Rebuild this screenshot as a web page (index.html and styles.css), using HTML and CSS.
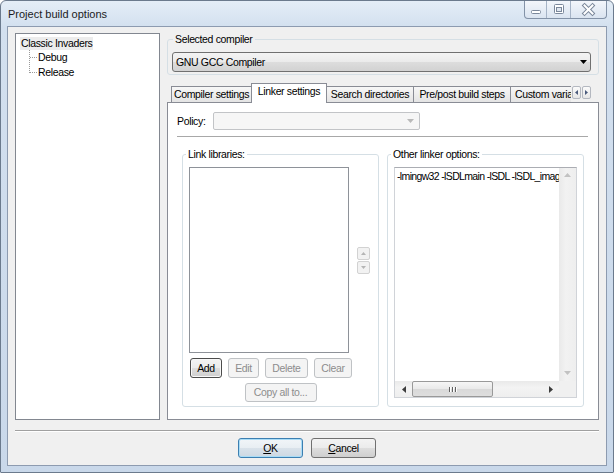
FILE: index.html
```html
<!DOCTYPE html>
<html>
<head>
<meta charset="utf-8">
<title>Project build options</title>
<link rel="stylesheet" href="styles.css">
</head>
<body>
<div class="window">
  <div class="titlebar">
    <span class="title">Project build options</span>
    <div class="caption">
      <span class="cap cap-min"><svg width="21" height="17" viewBox="0 0 21 17"><rect x="6.5" y="9.5" width="9" height="3" rx="1" fill="#fff" stroke="#7b889b"/></svg></span>
      <span class="cap cap-max"><svg width="24" height="17" viewBox="0 0 24 17"><rect x="7.5" y="3.5" width="9" height="9" rx="1" fill="#fff" stroke="#7b889b"/><rect x="9.5" y="6.5" width="5" height="4" fill="#dfe6ef" stroke="#7b889b"/></svg></span>
      <span class="cap cap-close"><svg width="36" height="17" viewBox="0 0 36 17"><path d="M13.5 4.5L21.5 12.5M21.5 4.5L13.5 12.5" stroke="#7b889b" stroke-width="4" stroke-linecap="square"/><path d="M13.5 4.5L21.5 12.5M21.5 4.5L13.5 12.5" stroke="#ffffff" stroke-width="2" stroke-linecap="square"/></svg></span>
    </div>
  </div>
  <div class="client">
    <div class="main">
      <div class="tree">
        <div class="tree-root"><span class="tree-sel">Classic Invaders</span></div>
        <div class="tree-children">
          <svg class="tree-lines" width="12" height="30" viewBox="0 0 12 30"><path d="M4.5 0V22.5M5 7.5H12M5 22.5H12" stroke="#9a9a9a" stroke-dasharray="1 1" fill="none" shape-rendering="crispEdges"/></svg>
          <ul class="tree-list">
            <li>Debug</li>
            <li>Release</li>
          </ul>
        </div>
      </div>
      <div class="right">
        <fieldset class="group compiler-group">
          <legend>Selected compiler</legend>
          <div class="combo">
            <span class="combo-text">GNU GCC Compiler</span>
            <svg class="combo-arrow" width="7" height="4" viewBox="0 0 7 4"><polygon points="0,0 7,0 3.5,4" fill="#000"/></svg>
          </div>
        </fieldset>
        <div class="notebook">
          <div class="tabrow">
            <div class="tabs">
              <div class="tab tab-compiler">Compiler settings</div>
              <div class="tab tab-linker tab-active">Linker settings</div>
              <div class="tab tab-search">Search directories</div>
              <div class="tab tab-prepost">Pre/post build steps</div>
              <div class="tab tab-custom">Custom variables</div>
            </div>
            <div class="tab-arrows">
              <span class="tab-arrow"><svg width="3" height="5" viewBox="0 0 3 5"><polygon points="3,0 3,5 0,2.5" fill="#4a5a7c"/></svg></span>
              <span class="tab-arrow"><svg width="3" height="5" viewBox="0 0 3 5"><polygon points="0,0 0,5 3,2.5" fill="#4a5a7c"/></svg></span>
            </div>
          </div>
          <div class="tabpanel">
            <div class="policy-row">
              <span class="policy-label">Policy:</span>
              <div class="combo combo-disabled">
                <svg class="combo-arrow" width="7" height="4" viewBox="0 0 7 4"><polygon points="0,0 7,0 3.5,4" fill="#b9b9b9"/></svg>
              </div>
            </div>
            <div class="hsep"></div>
            <div class="groups">
              <fieldset class="group group-box group-libs">
                <legend>Link libraries:</legend>
                <div class="libs-top">
                  <div class="listbox"></div>
                  <div class="spin">
                    <span class="spin-btn"><svg width="5" height="3" viewBox="0 0 5 3"><polygon points="0,3 5,3 2.5,0" fill="#b5b5b5"/></svg></span>
                    <span class="spin-btn"><svg width="5" height="3" viewBox="0 0 5 3"><polygon points="0,0 5,0 2.5,3" fill="#b5b5b5"/></svg></span>
                  </div>
                </div>
                <div class="lib-buttons">
                  <span class="btn btn-add">Add</span>
                  <span class="btn btn-disabled btn-edit">Edit</span>
                  <span class="btn btn-disabled btn-delete">Delete</span>
                  <span class="btn btn-disabled btn-clear">Clear</span>
                </div>
                <span class="btn btn-disabled btn-copy">Copy all to...</span>
              </fieldset>
              <fieldset class="group group-box group-opts">
                <legend>Other linker options:</legend>
                <div class="textarea">
                  <div class="ta-text">-lmingw32 -lSDLmain -lSDL -lSDL_image</div>
                  <div class="vscroll">
                    <svg width="7" height="4" viewBox="0 0 7 4"><polygon points="0,4 7,4 3.5,0" fill="#c2c2c2"/></svg>
                    <svg width="7" height="4" viewBox="0 0 7 4"><polygon points="0,0 7,0 3.5,4" fill="#c2c2c2"/></svg>
                  </div>
                  <div class="hscroll">
                    <span class="hs-arrow"><svg width="4" height="7" viewBox="0 0 4 7"><polygon points="4,0 4,7 0,3.5" fill="#3c3c3c"/></svg></span>
                    <span class="hs-thumb"><span class="grip"></span><span class="grip"></span><span class="grip"></span></span>
                    <span class="hs-track"></span>
                    <span class="hs-arrow"><svg width="4" height="7" viewBox="0 0 4 7"><polygon points="0,0 0,7 4,3.5" fill="#3c3c3c"/></svg></span>
                  </div>
                  <div class="corner"></div>
                </div>
              </fieldset>
            </div>
          </div>
        </div>
      </div>
    </div>
    <div class="dlg-sep"></div>
    <div class="dlg-buttons">
      <span class="btn btn-dlg btn-default"><u>O</u>K</span>
      <span class="btn btn-dlg"><u>C</u>ancel</span>
    </div>
  </div>
</div>
</body>
</html>
```
FILE: styles.css
```css
* { box-sizing: border-box; }
html, body { margin: 0; padding: 0; background: #ffffff; }
body {
  font-family: "Liberation Sans", Arial, sans-serif;
  font-size: 10.5px;
  letter-spacing: -0.35px;
  line-height: 13px;
  color: #000;
}

/* window frame */
.window {
  width: 614px;
  height: 473px;
  border: 1px solid #6b7a8d;
  border-radius: 6px 6px 1px 1px;
  background: linear-gradient(180deg, #e4edf7 0px, #d3e0ef 26px, #c9d8ea 100%);
  padding: 0 6px 6px;
  display: flex;
  flex-direction: column;
  overflow: hidden;
}
.titlebar { flex: none; height: 25px; display: flex; align-items: flex-start; }
.title {
  margin: 6px 0 0 1px;
  font-size: 11px;
  letter-spacing: 0;
  line-height: 14px;
  color: #1b1b1b;
}
.caption {
  margin-left: auto;
  display: flex;
  height: 18px;
  border: 1px solid #8392a7;
  border-top: none;
  border-radius: 0 0 4px 4px;
  background: linear-gradient(180deg, #f3f6fb, #dae4f0);
  overflow: hidden;
}
.cap { display: block; height: 17px; }
.cap svg { display: block; }
.cap + .cap { border-left: 1px solid #a5b3c6; }
.cap-min { width: 21px; }
.cap-max { width: 24px; }
.cap-close { width: 36px; }

/* client area */
.client {
  flex: 1;
  border: 1px solid #8d9bb0;
  background: #f0f0f0;
  padding: 6px 7px 0;
  display: flex;
  flex-direction: column;
}
.main { flex: none; height: 387px; display: flex; gap: 7px; }

/* tree */
.tree {
  flex: none;
  width: 145px;
  border: 1px solid #828790;
  background: #fff;
  padding: 3px 0 0 4px;
}
.tree-root { height: 13px; }
.tree-sel { display: inline-block; padding: 0 1px; background: #ececec; line-height: 13px; }
.tree-children { display: flex; margin-left: 5px; }
.tree-lines { display: block; flex: none; }
.tree-list { list-style: none; margin: 0 0 0 1px; padding: 0; }
.tree-list li { line-height: 15px; }

/* right column */
.right { flex: 1; min-width: 0; display: flex; flex-direction: column; }
.group {
  margin: 0;
  border: 1px solid #d5dfe5;
  border-radius: 3px;
  min-width: 0;
}
.group legend { padding: 0 2px; line-height: 13px; }
.compiler-group { flex: none; padding: 0 7px 2px 4px; }
.compiler-group legend { margin-left: 1px; }

.combo {
  height: 20px;
  margin-top: 6px;
  border: 1px solid #707070;
  border-radius: 3px;
  background: linear-gradient(180deg, #f3f3f3 0%, #ebebeb 50%, #dddddd 51%, #d2d2d2 100%);
  display: flex;
  align-items: center;
  padding: 0 3px 0 3px;
}
.combo-text { flex: 1; }
.combo-arrow { display: block; flex: none; }

/* notebook */
.notebook { flex: 1; min-height: 0; margin-top: 8px; display: flex; flex-direction: column; }
.tabrow { flex: none; height: 19px; display: flex; align-items: flex-end; padding-left: 4px; }
.tabs {
  position: relative;
  z-index: 1;
  width: 400px;
  height: 20px;
  margin-bottom: -1px;
  display: flex;
  align-items: flex-end;
  overflow: hidden;
}
.tab {
  flex: none;
  height: 16px;
  margin-bottom: 1px;
  border: 1px solid #898c95;
  border-bottom: none;
  background: linear-gradient(180deg, #f7f7f7, #e4e4e4);
  line-height: 15px;
  text-align: center;
  white-space: nowrap;
  overflow: hidden;
}
.tab + .tab { margin-left: -1px; }
.tab-active {
  position: relative;
  z-index: 1;
  height: 20px;
  margin-bottom: 0;
  background: #fff;
  line-height: 15px;
}
.tab-compiler { width: 81px; }
.tab-linker { width: 76px; }
.tab-search { width: 88px; }
.tab-prepost { width: 98px; }
.tab-custom { width: 70px; text-align: left; padding-left: 4px; }

.tab-arrows { display: flex; gap: 1px; margin: 0 0 3px 1px; }
.tab-arrow {
  width: 9px;
  height: 13px;
  border: 1px solid #b4b8c0;
  border-radius: 2px;
  background: linear-gradient(180deg, #fbfbfb, #e6e6e6);
  display: flex;
  align-items: center;
  justify-content: center;
}
.tab-arrow svg { display: block; }

.tabpanel {
  flex: 1;
  min-height: 0;
  border: 1px solid #898c95;
  background: #fff;
  padding-top: 9px;
}
.policy-row { display: flex; align-items: center; height: 18px; margin-left: 9px; }
.policy-label { width: 36px; flex: none; }
.combo-disabled {
  width: 207px;
  height: 18px;
  margin-top: 0;
  border: 1px solid #c2c4c7;
  border-radius: 2px;
  background: #f6f6f6;
  justify-content: flex-end;
  padding-right: 5px;
}
.hsep { height: 1px; background: #a8a8a8; margin: 6px 10px 0 9px; }
.groups { display: flex; gap: 8px; margin: 11px 0 0 14px; }
.group-box { flex: none; width: 197px; height: 259px; padding: 0 6px; }
.group-box legend { margin-left: -3px; }

.libs-top { display: flex; align-items: center; gap: 8px; margin-top: 6px; }
.listbox { width: 160px; height: 186px; border: 1px solid #8e9299; background: #fff; }
.spin { display: flex; flex-direction: column; gap: 1px; }
.spin-btn {
  width: 13px;
  height: 13px;
  border: 1px solid #d2d2d2;
  border-radius: 2px;
  background: #f2f2f2;
  display: flex;
  align-items: center;
  justify-content: center;
}
.spin-btn svg { display: block; }

.btn {
  display: flex;
  align-items: center;
  justify-content: center;
  height: 20px;
  border: 1px solid #707070;
  border-radius: 3px;
  background: linear-gradient(180deg, #f3f3f3 0%, #ebebeb 50%, #dddddd 51%, #cfcfcf 100%);
  color: #000;
  white-space: nowrap;
}
.btn-disabled {
  border-color: #bfc2c5;
  background: #f4f4f4;
  color: #8d8d8d;
}
.lib-buttons { display: flex; gap: 6px; margin: 5px 0 0 1px; }
.btn-add { width: 32px; border-color: #4c4c4c; box-shadow: inset 0 0 0 1px #f8f8f8; }
.btn-edit { width: 31px; }
.btn-delete { width: 43px; }
.btn-clear { width: 38px; }
.btn-copy { width: 72px; height: 19px; margin: 5px auto 0; }

.textarea {
  margin-top: 6px;
  height: 231px;
  border: 1px solid #d0d3d8;
  border-top-color: #abadb3;
  background: #fff;
  display: grid;
  grid-template-columns: 1fr 17px;
  grid-template-rows: 1fr 16px;
}
.ta-text { padding: 2px 0 0 2px; white-space: nowrap; overflow: hidden; letter-spacing: -0.65px; }
.vscroll {
  background: linear-gradient(90deg, #e9e9e9, #f2f2f2 40%, #eeeeee);
  display: flex;
  flex-direction: column;
  justify-content: space-between;
  align-items: center;
  padding: 5px 0 6px;
}
.vscroll svg { display: block; }
.hscroll {
  display: flex;
  align-items: stretch;
  background: linear-gradient(180deg, #e9e9e9, #f3f3f3 40%, #eeeeee);
}
.hs-arrow { width: 17px; flex: none; display: flex; align-items: center; justify-content: center; }
.hs-arrow svg { display: block; }
.hs-thumb {
  width: 81px;
  flex: none;
  border: 1px solid #999;
  border-radius: 2px;
  background: linear-gradient(180deg, #f6f6f6 0%, #e9e9e9 50%, #d9d9d9 51%, #dedede 100%);
  display: flex;
  align-items: center;
  justify-content: center;
  gap: 1px;
}
.grip { width: 1px; height: 5px; background: #606060; box-shadow: 1px 0 0 #fff; margin-right: 1px; }
.hs-track { flex: 1; }
.corner { background: #f0f0f0; }

/* dialog footer */
.dlg-sep { flex: none; height: 2px; margin-top: 10px; border-top: 1px solid #a0a0a0; border-bottom: 1px solid #ffffff; }
.dlg-buttons { flex: none; display: flex; justify-content: center; gap: 8px; margin-top: 6px; }
.btn-dlg { width: 65px; }
.btn-default {
  border-color: #3c7fb1;
  box-shadow: inset 0 0 0 1px #a9dcf6;
  background: linear-gradient(180deg, #f1f5f8 0%, #e8eef3 50%, #d9e2ea 51%, #cdd8e2 100%);
}
```
